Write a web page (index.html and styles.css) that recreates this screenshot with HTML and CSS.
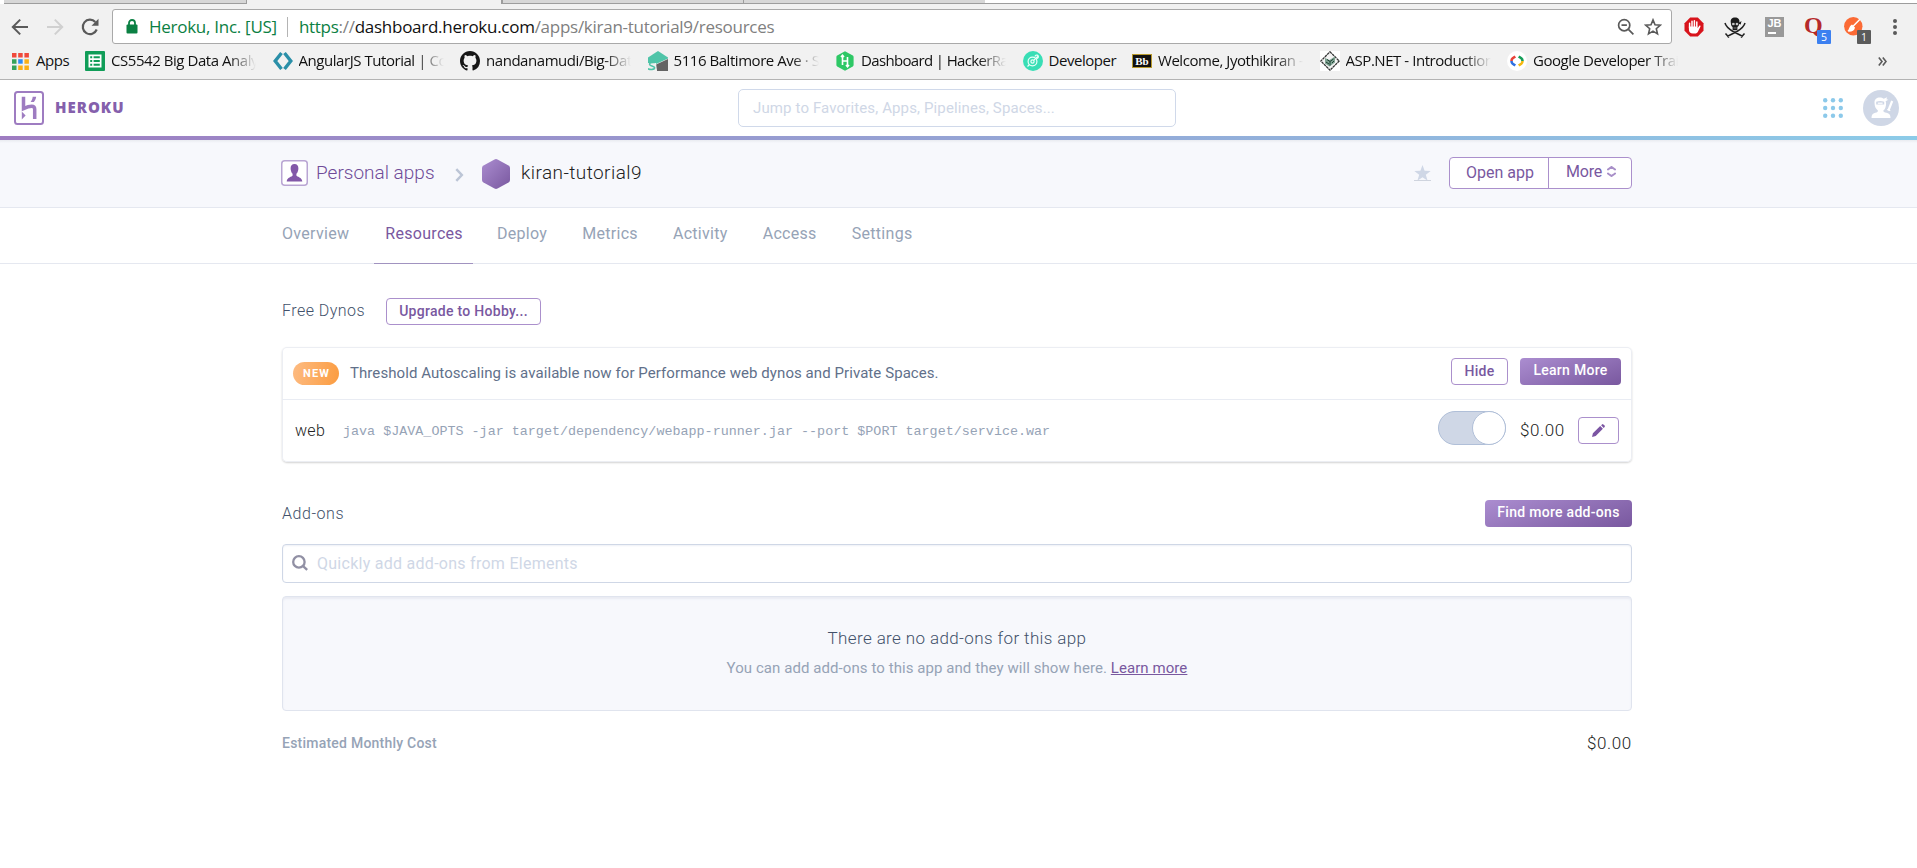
FILE: index.html
```html
<!DOCTYPE html>
<html lang="en">
<head>
<meta charset="utf-8">
<title>kiran-tutorial9 · Resources | Heroku</title>
<link rel="stylesheet" href="styles.css">
</head>
<body>
<div class="browser">
  <div class="tabstrip"><i class="tab-a"></i><i class="tab-active"></i><i class="tab-b"></i><i class="tab-c"></i><i class="tab-rest"></i></div>
  <div class="toolbar">
    <div class="nav-buttons">
      <svg width="18" height="18" viewBox="0 0 18 18" fill="none" stroke="#5a5a5a" stroke-width="2"><path d="M17 9H2.5M9.2 1.6L1.8 9l7.4 7.4"/></svg>
      <svg width="18" height="18" viewBox="0 0 18 18" fill="none" stroke="#d0d0d0" stroke-width="2"><path d="M1 9h14.5M8.800 1.600L16.200 9l-7.400 7.400"/></svg>
      <svg width="18" height="18" viewBox="0 0 18 18" fill="none" stroke="#5a5a5a" stroke-width="2.200"><path d="M15.700 11.500A7.200 7.200 0 1 1 14.300 4"/><path d="M17.500 .8v7h-7z" fill="#5a5a5a" stroke="none"/></svg>
    </div>
    <div class="omnibox">
      <svg class="lock" width="12" height="15" viewBox="0 0 12 15"><path d="M3 7V4a3 3 0 0 1 6 0v3" fill="none" stroke="#0b8043" stroke-width="1.800"/><rect x="0.500" y="5.500" width="11" height="9" rx="1" fill="#0b8043"/></svg>
      <span class="owner">Heroku, Inc. [US]</span>
      <i class="sep"></i>
      <span class="url"><b class="scheme">https</b>://<b class="host">dashboard.heroku.com</b>/apps/kiran-tutorial9/resources</span>
      <svg class="zoomout" width="18" height="18" viewBox="0 0 18 18" fill="none" stroke="#5a5a5a" stroke-width="1.700"><circle cx="7.200" cy="7.200" r="5.600"/><path d="M11.400 11.400l5 5M4.500 7.200h5.400"/></svg>
      <svg class="star" width="18" height="18" viewBox="0 0 18 18" fill="none" stroke="#5a5a5a" stroke-width="1.600"><path d="M9 1.900l2 4.900 5.300.4-4 3.500 1.200 5.200L9 13.100l-4.500 2.800 1.200-5.200-4-3.500 5.300-.4z"/></svg>
    </div>
    <div class="extensions">
      <svg width="20" height="20" viewBox="0 0 20 20"><path d="M6.200.5h7.600l5.700 5.700v7.600l-5.700 5.700H6.200L.5 13.800V6.200z" fill="#d8141c"/><path d="M5.600 11V6.300M8 9.500V4.200M10.400 9.500V3.700M12.800 9.500V5" stroke="#fff" stroke-width="1.500" stroke-linecap="round" fill="none"/><path d="M4.900 9.500h8.700v1.700l1.500-2.300c.6-.7 1.700-.2 1.400.6l-2.600 5.300c-.6 1.200-1.500 1.800-3 1.800H8.800c-2.300 0-3.900-1.400-3.900-4z" fill="#fff"/></svg>
      <svg width="22" height="22" viewBox="0 0 22 22"><path d="M1 6c1 4 4 6 8 8.500l10 5M21 6c-1 4-4 6-8 8.500l-10 5M1.500 16.500l3.500 4M20.500 16.500l-3.500 4" stroke="#222" stroke-width="1.500" fill="none"/><path d="M6.800 5.500C6.300 2.500 8 .6 11 .6s4.900 1.800 4.400 4.900L17.500 4l-.8 3.500-1.600-.4c0 1.600-.9 2.500-1.700 3v3.200H8.600v-3.200c-1-.5-1.600-1.600-1.700-3.500z" fill="#1c1c1c"/><path d="M8.400 6.300h1.900v1.500H8.400zM12 6.300h1.900v1.500H12zM9.600 11h3" fill="#eee" stroke="#ddd" stroke-width=".5"/></svg>
      <span class="jb"><span>JB</span></span>
      <span class="ext-q"><span class="q">Q</span><span class="badge blue">5</span></span>
      <span class="ext-o"><svg width="19" height="19" viewBox="0 0 19 19"><circle cx="9.300" cy="9.300" r="9.200" fill="#fb6a35"/><path d="M15.500 2.800L9.300 9" stroke="#fff" stroke-width="1.500" stroke-linecap="round"/><path d="M8 7.500l3 3c-.5 3-3 4.300-6.500 4.200l-1-1C5.500 12.500 5 9 8 7.500z" fill="#fff"/></svg><span class="badge gray">1</span></span>
      <svg width="6" height="18" viewBox="0 0 6 18" fill="#5a5a5a"><circle cx="3" cy="3" r="2"/><circle cx="3" cy="9" r="2"/><circle cx="3" cy="15" r="2"/></svg>
    </div>
  </div>
  <div class="bookmarks">
    <div class="bm apps"><svg width="17" height="17" viewBox="0 0 17 17"><path d="M0 0h4.500v4.500H0zM6.200 0h4.500v4.500H6.200zM12.400 0h4.500v4.500h-4.500z" fill="#f04a3c"/><path d="M0 6.200h4.500v4.500H0zM0 12.400h4.500v4.500H0z" fill="#35a35b"/><path d="M6.200 6.200h4.500v4.500H6.200z" fill="#2d8cf5"/><path d="M12.400 6.200h4.500v4.500h-4.500zM6.200 12.400h4.500v4.500H6.200zM12.400 12.400h4.500v4.500h-4.500z" fill="#fbb016"/></svg><span>Apps</span></div>
    <div class="bm"><svg width="20" height="20" viewBox="0 0 20 20"><rect width="20" height="20" rx="1" fill="#109d58"/><path d="M3.500 3.500h13v13h-13z" fill="#fff"/><path d="M5.200 5.200h2v2h-2zM8.600 5.200h6.200v2H8.600zM5.200 9h2v2h-2zM8.600 9h6.200v2H8.600zM5.200 12.800h2v2h-2zM8.600 12.800h6.200v2H8.600z" fill="#109d58"/></svg><span class="fade">CS5542 Big Data Analy</span></div>
    <div class="bm"><svg width="20" height="20" viewBox="0 0 20 20" fill="none" stroke-width="3.400"><path d="M8.500 2L2.200 10l6.300 8" stroke="#2a8fa8"/><path d="M11.500 2l6.300 8-6.300 8" stroke="#2a8fa8"/></svg><span class="fade">AngularJS Tutorial | Co</span></div>
    <div class="bm"><svg width="20" height="20" viewBox="0 0 16 16"><path fill="#161616" d="M8 0C3.580 0 0 3.580 0 8c0 3.540 2.290 6.530 5.470 7.590.4.070.55-.17.55-.38 0-.19-.01-.82-.01-1.490-2.010.37-2.530-.49-2.690-.94-.09-.23-.48-.94-.82-1.130-.28-.15-.68-.52-.01-.53.63-.01 1.080.58 1.230.82.72 1.210 1.870.87 2.330.66.07-.52.28-.87.51-1.070-1.780-.2-3.640-.89-3.640-3.950 0-.87.31-1.590.82-2.150-.08-.2-.36-1.020.08-2.120 0 0 .67-.21 2.200.82.64-.18 1.320-.27 2-.27s1.360.09 2 .27c1.530-1.040 2.200-.82 2.200-.82.44 1.100.16 1.920.08 2.120.51.56.82 1.270.82 2.150 0 3.070-1.870 3.750-3.650 3.950.29.25.54.73.54 1.480 0 1.070-.01 1.930-.01 2.200 0 .21.15.46.55.38A8.010 8.010 0 0 0 16 8c0-4.420-3.580-8-8-8z"/></svg><span class="fade">nandanamudi/Big-Dat</span></div>
    <div class="bm"><svg width="20" height="20" viewBox="0 0 20 20"><path d="M10 0l10 6.500v1L8 13H0V6.500z" fill="#4fc4a8"/><path d="M20 8v12H9l-2-6z" fill="#646464"/><path d="M0 12h8l1 8H0z" fill="#f1f1f1"/><path d="M7 11.500C3.500 11 .5 12 2 14c1.300 1.500 5 1.300 4.600 3-.3 1.700-4 1.800-6.600.8" fill="none" stroke="#4fc4a8" stroke-width="1.600"/></svg><span class="fade">5116 Baltimore Ave · S</span></div>
    <div class="bm"><svg width="20" height="20" viewBox="0 0 20 20"><path d="M10 .3l7.800 4.300q.8.500.8 1.400v8q0 .9-.8 1.400L10 19.700l-7.800-4.300q-.8-.5-.8-1.400V6q0-.9.8-1.400z" fill="#2ec866"/><path d="M7.500 4.500v9.500M12.500 6v9.500M7.500 10h5M6 6l1.500-1.800L9 6M11 14l1.500 1.800L14 14" stroke="#fff" stroke-width="1.600" fill="none"/></svg><span class="fade tight">Dashboard | HackerRa</span></div>
    <div class="bm dev"><svg width="20" height="20" viewBox="0 0 20 20" fill="none"><circle cx="10" cy="10" r="10" fill="#38deb5"/><g stroke="#e8fff8" stroke-width="1.200"><circle cx="9.500" cy="10.500" r="4.400"/><circle cx="9.500" cy="10.500" r="1.600"/><path d="M10.700 9.300l4-4M12 5.500c.5-2.300 4-1.500 3.300.7-.3.900-1 1.200-1.800 1.500M4.500 15.500l2-2"/></g></svg><span>Developer</span></div>
    <div class="bm"><i class="bb">Bb</i><span class="fade">Welcome, Jyothikiran -</span></div>
    <div class="bm"><svg width="20" height="20" viewBox="0 0 20 20"><rect width="20" height="20" fill="#fff"/><path d="M10 .8l9.200 9.200-9.200 9.200L.8 10z" fill="#f4f4f4" stroke="#333" stroke-width="1.300" stroke-dasharray="2.600 .6"/><path d="M5 7l4.500 2L15 5.500v6L9.500 15.500 5 12.500z" fill="#7fa392"/><path d="M7 8.500l3 2 3.500-2.500M10 10.500v4M6 11l3 2M12 12l2-2" stroke="#1f4034" fill="none"/></svg><span class="fade">ASP.NET - Introduction</span></div>
    <div class="bm"><svg width="20" height="20" viewBox="0 0 20 20" fill="none"><circle cx="10" cy="10" r="10" fill="#fff"/><g stroke-width="2.600"><path d="M8.300 5.500L5.700 7.300Q4.500 8.200 4.500 10" stroke="#e8433a"/><path d="M4.500 10q0 1.800 1.200 2.700l2.600 1.800" stroke="#2f6fe0"/><path d="M11.700 5.500l2.600 1.800q1.200.9 1.200 2.700" stroke="#159e58"/><path d="M15.500 10q0 1.800-1.200 2.700l-2.600 1.800" stroke="#f5b90f"/></g></svg><span class="fade">Google Developer Trai</span></div>
    <svg class="more" width="9" height="9" viewBox="0 0 9 9" fill="none" stroke="#5a5a5a" stroke-width="1.600"><path d="M.8.500l3.200 4-3.200 4M4.800.5l3.200 4-3.200 4"/></svg>
  </div>
</div>

<header class="topnav">
  <div class="brand">
    <svg width="30" height="34" viewBox="0 0 30 34" fill="none"><rect x="1" y="1" width="28" height="32" rx="2.500" stroke="#9e7cc1" stroke-width="2"/><path d="M9.500 5.800v11.800c3.500-1.600 5.800-2.300 8.200-2.300 2.500 0 3 1.300 3 3V28" stroke="#9e7cc1" stroke-width="3.500"/><path d="M7.800 20.500v8l3.800-4z" fill="#9e7cc1"/><path d="M16.600 11h3.300c1.300-1.600 2-3.300 2.300-5.200h-3.500c-.2 1.900-.9 3.600-2.100 5.200z" fill="#9e7cc1"/></svg>
    <span class="wordmark">HEROKU</span>
  </div>
  <div class="jump"><span>Jump to Favorites, Apps, Pipelines, Spaces...</span></div>
  <div class="account">
    <svg width="20" height="20" viewBox="0 0 20 20" fill="#8cc9ea"><circle cx="2.200" cy="2.200" r="2.200"/><circle cx="10" cy="2.200" r="2.200"/><circle cx="17.800" cy="2.200" r="2.200"/><circle cx="2.200" cy="10" r="2.200"/><circle cx="10" cy="10" r="2.200"/><circle cx="17.800" cy="10" r="2.200"/><circle cx="2.200" cy="17.800" r="2.200"/><circle cx="10" cy="17.800" r="2.200"/><circle cx="17.800" cy="17.800" r="2.200"/></svg>
    <svg width="36" height="36" viewBox="0 0 36 36"><circle cx="18" cy="18" r="18" fill="#cfd7e6"/><path d="M11.500 12.500c0-3.500 2.300-5 5.200-5 1.700 0 3 .4 4 1.200l3.500-1.400-.8 2 2 .5-2.800 1.400c.6 1 .7 4-.1 6-.4 1.500-1.200 2.500-2.200 3.300 0 1.500 1 1.800 3.200 2.200 3 .6 4 2.300 4 5.300H8.500c0-3 1-4.700 3.800-5.300 2-.4 2.600-.8 2.600-2.300-2-1.400-3.400-4-3.400-7.900z" fill="#fff"/><path d="M13.200 11.800q4-1.500 8 0v2.800h-8z" fill="#cfd7e6"/><path d="M14.800 13.200h4.800" stroke="#fff" stroke-width="1.200"/><path d="M29.200 11l-3.800 9.500" stroke="#fff" stroke-width="2.200"/><path d="M24.300 19.500l3 1.200" stroke="#fff" stroke-width="1.200"/></svg>
  </div>
</header>

<div class="appbar">
  <svg width="27" height="26" viewBox="0 0 27 26"><defs><linearGradient id="pu" x1="0" y1="0" x2="1" y2="1"><stop offset="0" stop-color="#ab8dd0"/><stop offset="1" stop-color="#79589f"/></linearGradient></defs><rect x=".75" y=".75" width="25.500" height="24.500" rx="3" fill="#fff" stroke="#b9a5d3" stroke-width="1.500"/><path d="M13.500 4c2.600 0 3.900 1.800 3.900 4.300 0 2.300-.9 4.700-2 5.500v1.700c.6 1.500 5.600 1.500 5.900 6H5.700c.3-4.500 5.300-4.500 5.900-6v-1.700c-1.100-.8-2-3.200-2-5.500C9.600 5.800 10.900 4 13.500 4z" fill="#8258a8"/></svg>
  <a class="personal">Personal apps</a>
  <svg class="chev" width="9" height="14" viewBox="0 0 9 14" fill="none" stroke="#bcc5d6" stroke-width="2.500"><path d="M1.300 1.200L6.800 7l-5.500 5.800"/></svg>
  <svg class="hex" width="28" height="30" viewBox="0 0 28 30"><path d="M12.500.4q1.500-.8 3 0l11 6.100q1.500.9 1.500 2.500v12q0 1.600-1.500 2.500l-11 6.100q-1.500.8-3 0l-11-6.100Q0 22.600 0 21V9q0-1.600 1.500-2.500z" fill="url(#pu)"/></svg>
  <span class="appname">kiran-tutorial9</span>
  <svg class="fav" width="17" height="17" viewBox="0 0 17 17"><path d="M8.500 0l2.100 5.800 6.100.2-4.900 3.700 1.800 6-5.100-3.500-5.100 3.500 1.800-6L.3 6l6.100-.2z" fill="#cfd7e6"/><path d="M0 15.500h17" stroke="#cfd4de"/></svg>
  <div class="btn-group"><a class="open"><span>Open app</span></a><a class="moreb"><span>More</span><svg width="9" height="11" viewBox="0 0 9 11" fill="none" stroke="#a88fc8" stroke-width="2"><path d="M1 4.200V3.500L4.500 1 8 3.500v.7M1 6.800v.7L4.500 10 8 7.500v-.7"/></svg></a></div>
</div>

<nav class="tabs"><a>Overview</a><a class="on">Resources</a><a>Deploy</a><a>Metrics</a><a>Activity</a><a>Access</a><a>Settings</a></nav>

<main>
  <div class="dynos-head"><h2>Free Dynos</h2><a class="btn ghost upgrade"><span>Upgrade to Hobby...</span></a></div>
  <section class="card">
    <div class="notice">
      <span class="new"><span>NEW</span></span>
      <p>Threshold Autoscaling is available now for Performance web dynos and Private Spaces.</p>
      <a class="btn ghost hide"><span>Hide</span></a><a class="btn solid learn"><span>Learn More</span></a>
    </div>
    <div class="dyno">
      <span class="proc">web</span>
      <code>java $JAVA_OPTS -jar target/dependency/webapp-runner.jar --port $PORT target/service.war</code>
      <span class="toggle"><i></i></span>
      <span class="price">$0.00</span>
      <a class="btn ghost edit"><svg width="13" height="13" viewBox="0 0 13 13" fill="#7b55a3"><path d="M0 13l.9-3.700 7.300-7.200 2.700 2.700-7.200 7.300zM9.100 1.300L10 .4q.7-.6 1.400 0l1.200 1.200q.6.700 0 1.400l-.9.900z"/></svg></a>
    </div>
  </section>
  <div class="addons-head"><h2>Add-ons</h2><a class="btn solid find"><span>Find more add-ons</span></a></div>
  <div class="search"><svg width="16" height="16" viewBox="0 0 16 16" fill="none" stroke="#9190a4" stroke-width="2.300"><circle cx="6.900" cy="6.900" r="5.700"/><path d="M10.800 10.800l4.400 4"/></svg><span>Quickly add add-ons from Elements</span></div>
  <section class="empty">
    <h3>There are no add-ons for this app</h3>
    <p><span class="hint">You can add add-ons to this app and they will show here.</span> <a>Learn more</a></p>
  </section>
  <div class="cost"><b>Estimated Monthly Cost</b><span class="price total">$0.00</span></div>
</main>
</body>
</html>
```
FILE: styles.css
```css
* { box-sizing: border-box; }
html, body { margin: 0; background: #fff; }
body { height: 868px; overflow: hidden; font-family: Roboto, "Liberation Sans", sans-serif; font-weight: 400; color: #3f3f44; }
svg { display: block; flex: none; }
h2, h3, p { margin: 0; font-weight: 400; }
span, a, p, h2, h3, code, b { white-space: nowrap; }

/* Browser chrome */
.browser { height: 80px; background: #f1f1f1; border-bottom: 1px solid #b3b3b3; font-family: "Open Sans", "Noto Sans", sans-serif; font-weight: 400; color: #111; }
.tabstrip { display: flex; height: 4px; background: #fff; }
.tabstrip i { background: #d7d7d7; border-bottom: 1px solid #9d9d9d; }
.tabstrip .tab-a { width: 243px; margin-left: 4px; border-right: 1px solid #9d9d9d; }
.tabstrip .tab-active { width: 254px; background: #f1f1f1; border-bottom: 0; }
.tabstrip .tab-b { width: 242px; border-left: 2px solid #9d9d9d; }
.tabstrip .tab-c { width: 242px; border-left: 1px solid #9d9d9d; }
.tabstrip .tab-rest { flex: 1; background: #fff; }
.toolbar { display: flex; height: 40px; padding: 5px 19px 0 11px; }
.nav-buttons { display: flex; gap: 17px; width: 101px; padding-top: 9px; }
.omnibox { display: flex; align-items: center; width: 1560px; height: 35px; padding: 0 9px 0 13px; background: #fff; border: 1px solid #a9a9a9; border-radius: 3px; font-size: 17px; color: #808080; }
.omnibox b { font-weight: 400; }
.omnibox span { line-height: 30px; letter-spacing: -.27px; }
.owner { margin-left: 11px; color: #0b8043; }
.scheme { color: #0b8043; }
.host { color: #111; }
.sep { width: 1px; height: 20px; margin: 0 11px 0 10px; background: #b4b4b4; }
.zoomout { margin-left: auto; margin-right: 9px; }
.extensions { display: flex; flex: 1; align-items: flex-start; padding-top: 8px; margin-left: 12px; }
.extensions > * { flex: none; margin-right: 20px; }
.extensions > :nth-child(2) { margin-right: 19px; }
.extensions > :last-child { margin: 1px 0 0 auto; }
.jb { width: 19px; height: 20px; background: #999; color: #fff; font: 700 11px/13px "Liberation Sans", sans-serif; text-align: center; }
.jb span { display: block; }
.jb::after { content: ""; display: block; width: 8px; height: 2px; margin: 2px 0 0 3px; background: #fff; }
.ext-q, .ext-o { position: relative; width: 20px; height: 20px; }
.q { display: block; font: 700 24px/17px "Liberation Serif", serif; color: #b5292b; }
.badge { position: absolute; left: 13px; top: 13px; width: 14px; height: 14px; border-radius: 1px; color: #fff; font: 10.500px/15px "Open Sans", sans-serif; text-align: center; }
.badge.blue { background: #3c80f0; }
.badge.gray { background: #5b5b5b; }

.bookmarks { display: flex; align-items: center; height: 35px; padding: 0 30px 1px 12px; font-size: 15px; }
.bm { display: flex; align-items: center; gap: 6px; height: 24px; width: 172px; margin-right: 15.500px; flex: none; }
.bm.apps { width: 57px; gap: 7px; margin-right: 16px; }
.bm.dev { width: 94px; }
.bm span { line-height: 20px; padding-bottom: 2px; letter-spacing: -.45px; }
.bm .tight { letter-spacing: -.65px; }
.bm .fade { width: 146px; -webkit-mask-image: linear-gradient(90deg, #000 118px, transparent 145px); mask-image: linear-gradient(90deg, #000 118px, transparent 145px); }
.bm .bb { width: 20px; height: 14px; border: 1px solid #b89a2e; background: #111; color: #fff; font: 700 11px/12px "Liberation Serif", serif; text-align: center; }
.more { margin-left: auto; }

/* Heroku header */
.topnav { display: grid; grid-template-columns: 1fr 438px 1fr; align-items: center; height: 60px; padding: 0 18px 4px 15px; background: linear-gradient(90deg, #9e7cc1, #8ccbe8) bottom / 100% 4px no-repeat #fff; }
.brand { display: flex; align-items: center; gap: 11px; margin-left: -1px; }
.wordmark { padding-bottom: 2px; font: 800 15px/20px "Open Sans", sans-serif; letter-spacing: 1px; color: #8560ac; }
.jump { height: 38px; padding: 0 14px; border: 1px solid #d0d9ea; border-radius: 5px; font-size: 15px; line-height: 37px; letter-spacing: .13px; color: #cfd7e6; }
.account { display: flex; align-items: center; justify-content: flex-end; gap: 20px; }

.appbar { display: flex; height: 68px; padding: 17px 285px 0 281px; background: linear-gradient(#e9ebf0, #f7f8fc 3px); border-bottom: 1px solid #e5e8f0; font-size: 19px; font-weight: 300; }
.appbar > svg:first-child { margin-top: 3px; }
.personal { width: 119px; margin-left: 8px; line-height: 32px; color: #6f4b98; }
.chev { margin: 11px 0 0 20px; }
.hex { margin: 2px 0 0 18px; }
.appname { margin-left: 11px; line-height: 32px; letter-spacing: .43px; color: #222; }
.fav { margin: 8px 18px 0 auto; }
.btn-group { display: flex; width: 183px; height: 32px; border: 1px solid #ab90cc; border-radius: 4px; background: #fff; color: #79589f; font-size: 16px; font-weight: 400; line-height: 30px; }
.open { width: 99px; padding-left: 16px; border-right: 1px solid #ab90cc; }
.moreb { display: flex; padding-left: 17px; gap: 5px; line-height: 28px; letter-spacing: -.2px; }
.moreb svg { margin-top: 8px; }

.tabs { display: flex; gap: 11px; height: 56px; padding-left: 270px; border-bottom: 1px solid #e5e8f0; font-size: 16px; line-height: 51px; letter-spacing: .3px; color: #96a3b6; }
.tabs a { height: 56px; padding: 0 12px; }
.tabs .on { margin: 0 1px 0 2px; padding: 0 10px 0 11px; color: #79589f; border-bottom: 1px solid #a193c0; }

main { width: 1350px; margin-left: 282px; font-size: 16px; }
h2 { font-size: 16px; font-weight: 300; line-height: 25px; letter-spacing: .46px; color: #42516a; }
.btn { display: block; height: 27px; border-radius: 4px; font-size: 14px; font-weight: 500; line-height: 24px; letter-spacing: .29px; text-align: center; }
.ghost { border: 1px solid #ab90cc; background: #fff; color: #79589f; }
.solid { background: linear-gradient(160deg, #ab8dd0, #79589f); color: #fff; line-height: 25px; }
.dynos-head { display: flex; padding-top: 34px; }
.dynos-head h2 { width: 104px; }
.upgrade { width: 155px; }
.card { height: 115px; margin-top: 22px; border-radius: 5px; box-shadow: 0 0 0 1px #eceef3 inset, 0 1px 2px rgba(0,0,0,.18); }
.notice { display: flex; align-items: center; height: 53px; padding: 0 11px; border-bottom: 1px solid #e9ecf3; }
.new { width: 46px; height: 23px; padding-left: 1px; border-radius: 12px; background: linear-gradient(100deg, #fdbb82, #fb9c40); color: #fff; font-size: 11px; font-weight: 700; line-height: 23px; letter-spacing: 1.100px; text-align: center; }
.notice p { margin-left: 11px; font-size: 15px; letter-spacing: .07px; color: #61708a; }
.hide { width: 57px; margin: -3px 12px 0 auto; }
.learn { width: 101px; margin-top: -3px; }
.dyno { display: flex; align-items: center; height: 61px; padding: 0 13px 0 13px; }
.proc { width: 30px; font-weight: 300; letter-spacing: .3px; color: #222; }
.dyno code { margin: 2px 0 0 18px; font: 13.400px "Liberation Mono", monospace; color: #96a3b6; }
.toggle { width: 68px; height: 34px; margin: -6px 14px 0 auto; border: 1px solid #b0bfd8; border-radius: 17px; background: #cfd7e6; display: flex; justify-content: flex-end; }
.toggle i { width: 34px; height: 34px; margin: -1px; border: 1px solid #b0bfd8; border-radius: 50%; background: #fff; }
.price { width: 45px; margin-right: 13px; padding-bottom: 1px; font-size: 17px; font-weight: 300; letter-spacing: .6px; color: #222; }
.edit { width: 41px; padding: 6px 0 0 13px; }
.addons-head { display: flex; justify-content: space-between; margin-top: 38px; }
.addons-head h2 { line-height: 27px; letter-spacing: .55px; }
.find { width: 147px; }
.search { display: flex; gap: 9px; height: 39px; margin-top: 17px; padding: 10px 9px; border: 1px solid #cfd7e6; border-radius: 4px; color: #cfd7e6; line-height: 17px; letter-spacing: .27px; box-shadow: inset 0 1px 2px #eef0f6; }
.empty { height: 115px; margin-top: 13px; padding-top: 29px; border: 1px solid #e0e4ee; border-radius: 4px; background: #f7f8fc; box-shadow: inset 0 2px 2px #e9ebf3; text-align: center; }
.empty h3 { font-size: 17px; font-weight: 300; line-height: 24px; letter-spacing: .38px; color: #42516a; }
.empty p { font-size: 15px; line-height: 37px; letter-spacing: .07px; color: #96a3b6; }
.empty a { color: #79589f; text-decoration: underline; }
.cost { display: flex; justify-content: space-between; margin-top: 20px; line-height: 24px; }
.cost b { font-size: 14px; font-weight: 500; letter-spacing: .23px; color: #96a3b6; }
.total { margin-right: 0; }
```
